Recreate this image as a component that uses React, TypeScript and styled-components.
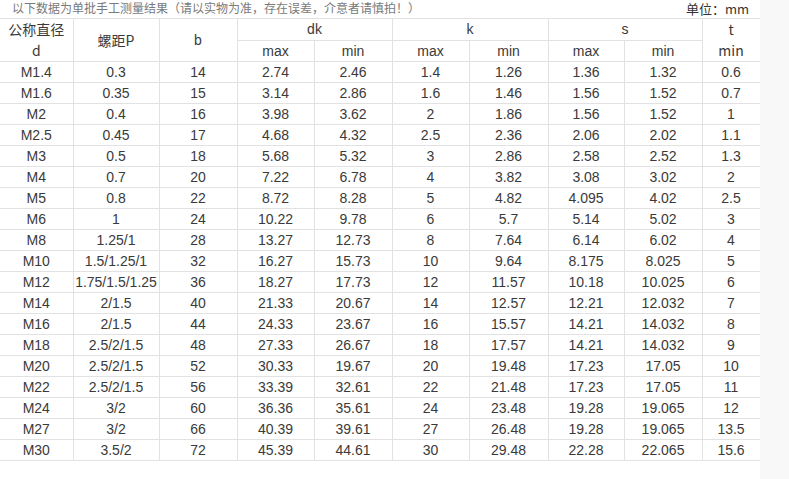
import styled, { createGlobalStyle } from "styled-components";

const GlobalStyle = createGlobalStyle`
  html, body {
    margin: 0;
    padding: 0;
    background: #ffffff;
  }
  body {
    font-family: "Liberation Sans", "Noto Sans CJK SC", Arial, sans-serif;
    color: #333333;
  }
`;

const Page = styled.div`
  display: flex;
  width: 789px;
  height: 479px;
  overflow: hidden;
`;

const Sheet = styled.div`
  width: 760px;
  flex: none;
  background: #ffffff;
`;

const Gutter = styled.div`
  flex: 1;
  background: #f8f8f8;
`;

const Caption = styled.div`
  display: flex;
  justify-content: space-between;
  align-items: center;
  height: 18px;
  padding: 0 11px 0 12px;
  box-sizing: border-box;
`;

const Note = styled.span`
  font-family: "Noto Sans CJK SC", sans-serif;
  font-size: 12px;
  line-height: 16px;
  color: #7a7a7a;
  margin-top: -2px;
`;

const Unit = styled.span`
  font-family: "Noto Sans CJK SC", sans-serif;
  font-size: 13px;
  line-height: 16px;
  color: #333333;
`;

const Table = styled.table`
  border-collapse: collapse;
  table-layout: fixed;
  width: 760px;
`;

const Cell = styled.td<{ $head?: boolean }>`
  height: 20px;
  padding: 0;
  border: 1px solid #e2e2e2;
  text-align: center;
  vertical-align: middle;
  font-size: 14px;
  font-weight: normal;
  line-height: 20px;
  color: #3a3a3a;
  white-space: nowrap;
  font-family: ${(p) =>
    p.$head
      ? `"Noto Sans CJK SC", "Liberation Sans", sans-serif`
      : `"Liberation Sans", sans-serif`};

  &:first-child {
    border-left: none;
  }
`;

const Stack = styled.div`
  display: flex;
  flex-direction: column;
  line-height: 21px;
  font-family: "Noto Sans CJK SC", "Liberation Sans", sans-serif;
`;

const widths = [73, 86, 78, 77, 78, 77, 79, 76, 78, 58];

const rows: string[][] = [
  ["M1.4", "0.3", "14", "2.74", "2.46", "1.4", "1.26", "1.36", "1.32", "0.6"],
  ["M1.6", "0.35", "15", "3.14", "2.86", "1.6", "1.46", "1.56", "1.52", "0.7"],
  ["M2", "0.4", "16", "3.98", "3.62", "2", "1.86", "1.56", "1.52", "1"],
  ["M2.5", "0.45", "17", "4.68", "4.32", "2.5", "2.36", "2.06", "2.02", "1.1"],
  ["M3", "0.5", "18", "5.68", "5.32", "3", "2.86", "2.58", "2.52", "1.3"],
  ["M4", "0.7", "20", "7.22", "6.78", "4", "3.82", "3.08", "3.02", "2"],
  ["M5", "0.8", "22", "8.72", "8.28", "5", "4.82", "4.095", "4.02", "2.5"],
  ["M6", "1", "24", "10.22", "9.78", "6", "5.7", "5.14", "5.02", "3"],
  ["M8", "1.25/1", "28", "13.27", "12.73", "8", "7.64", "6.14", "6.02", "4"],
  ["M10", "1.5/1.25/1", "32", "16.27", "15.73", "10", "9.64", "8.175", "8.025", "5"],
  ["M12", "1.75/1.5/1.25", "36", "18.27", "17.73", "12", "11.57", "10.18", "10.025", "6"],
  ["M14", "2/1.5", "40", "21.33", "20.67", "14", "12.57", "12.21", "12.032", "7"],
  ["M16", "2/1.5", "44", "24.33", "23.67", "16", "15.57", "14.21", "14.032", "8"],
  ["M18", "2.5/2/1.5", "48", "27.33", "26.67", "18", "17.57", "14.21", "14.032", "9"],
  ["M20", "2.5/2/1.5", "52", "30.33", "19.67", "20", "19.48", "17.23", "17.05", "10"],
  ["M22", "2.5/2/1.5", "56", "33.39", "32.61", "22", "21.48", "17.23", "17.05", "11"],
  ["M24", "3/2", "60", "36.36", "35.61", "24", "23.48", "19.28", "19.065", "12"],
  ["M27", "3/2", "66", "40.39", "39.61", "27", "26.48", "19.28", "19.065", "13.5"],
  ["M30", "3.5/2", "72", "45.39", "44.61", "30", "29.48", "22.28", "22.065", "15.6"],
];

export default function App() {
  return (
    <>
      <GlobalStyle />
      <Page>
        <Sheet>
          <Caption>
            <Note>
              以下数据为单批手工测量结果（请以实物为准，存在误差，介意者请慎拍！）
            </Note>
            <Unit>单位：mm</Unit>
          </Caption>
          <Table>
            <colgroup>
              {widths.map((w, i) => (
                <col key={i} style={{ width: w }} />
              ))}
            </colgroup>
            <thead>
              <tr>
                <Cell as="th" rowSpan={2} $head>
                  <Stack>
                    <span>公称直径</span>
                    <span>d</span>
                  </Stack>
                </Cell>
                <Cell as="th" rowSpan={2} $head>
                  螺距P
                </Cell>
                <Cell as="th" rowSpan={2}>
                  b
                </Cell>
                <Cell as="th" colSpan={2}>
                  dk
                </Cell>
                <Cell as="th" colSpan={2}>
                  k
                </Cell>
                <Cell as="th" colSpan={2}>
                  s
                </Cell>
                <Cell as="th" rowSpan={2}>
                  <Stack>
                    <span>t</span>
                    <span>min</span>
                  </Stack>
                </Cell>
              </tr>
              <tr>
                {["max", "min", "max", "min", "max", "min"].map((h, i) => (
                  <Cell as="th" key={i}>
                    {h}
                  </Cell>
                ))}
              </tr>
            </thead>
            <tbody>
              {rows.map((r) => (
                <tr key={r[0]}>
                  {r.map((v, i) => (
                    <Cell key={i}>{v}</Cell>
                  ))}
                </tr>
              ))}
            </tbody>
          </Table>
        </Sheet>
        <Gutter />
      </Page>
    </>
  );
}
